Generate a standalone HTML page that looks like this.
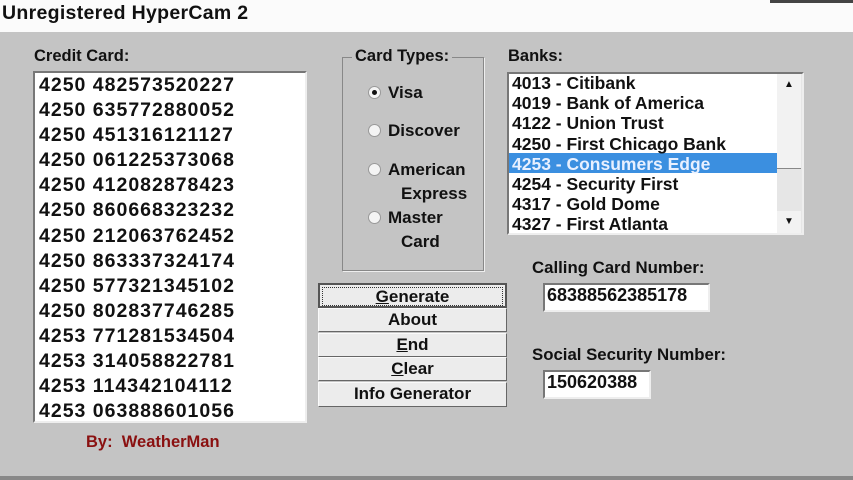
<!DOCTYPE html><html><head><style>
body{margin:0;width:853px;height:480px;background:#c4c4c4;position:relative;overflow:hidden;font-family:"Liberation Sans",sans-serif;font-weight:bold;color:#111}
.a{position:absolute;white-space:nowrap}
.box{position:absolute;background:#fff;border:2px solid;border-color:#777 #eee #eee #777;box-sizing:border-box}
.btn{position:absolute;left:318px;width:189px;background:#ececec;border:1px solid;border-color:#fafafa #666 #666 #fafafa;box-sizing:border-box;text-align:center;font-size:17px;line-height:22px}
.r{position:absolute;width:13px;height:13px;border-radius:50%;background:#f4f4f4;border:1px solid #999;box-sizing:border-box}
</style></head><body>
<div class="a" style="left:0;top:0;width:853px;height:32px;background:#fbfbfb"></div>
<div class="a" style="left:770px;top:0;width:83px;height:3px;background:#444"></div>
<div class="a" style="left:2px;top:2px;font-size:19.5px;letter-spacing:0.3px">Unregistered HyperCam 2</div>
<div class="a" style="left:34px;top:47px;font-size:16.5px">Credit Card:</div>
<div class="box" style="left:33px;top:71px;width:274px;height:352px"></div>
<div class="a" style="left:39px;top:73px;font-size:19.5px;letter-spacing:1px;line-height:25.1px">4250 482573520227<br>4250 635772880052<br>4250 451316121127<br>4250 061225373068<br>4250 412082878423<br>4250 860668323232<br>4250 212063762452<br>4250 863337324174<br>4250 577321345102<br>4250 802837746285<br>4253 771281534504<br>4253 314058822781<br>4253 114342104112<br>4253 063888601056</div>
<div class="a" style="left:342px;top:57px;width:140px;height:212px;border:1px solid #888;box-shadow:1px 1px 0 #eee"></div>
<div class="a" style="left:352px;top:47px;font-size:16.5px;background:#c4c4c4;padding:0 3px">Card Types:</div>
<div class="r" style="left:368px;top:86px"></div><div class="a" style="left:372px;top:90px;width:5px;height:5px;border-radius:50%;background:#111"></div>
<div class="r" style="left:368px;top:124px"></div><div class="r" style="left:368px;top:163px"></div><div class="r" style="left:368px;top:211px"></div>
<div class="a" style="left:388px;top:83px;font-size:17px">Visa</div>
<div class="a" style="left:388px;top:121px;font-size:17px">Discover</div>
<div class="a" style="left:388px;top:160px;font-size:17px">American</div>
<div class="a" style="left:401px;top:184px;font-size:17px">Express</div>
<div class="a" style="left:388px;top:208px;font-size:17px">Master</div>
<div class="a" style="left:401px;top:232px;font-size:17px">Card</div>
<div class="a" style="left:508px;top:47px;font-size:16.5px">Banks:</div>
<div class="box" style="left:507px;top:72px;width:297px;height:163px"></div>
<div class="a" style="left:509px;top:153px;width:268px;height:20px;background:#3b8fe0"></div>
<div class="a" style="left:777px;top:74px;width:25px;height:159px;background:#e6e6e6"></div>
<div class="a" style="left:777px;top:74px;width:24px;height:22px;background:#f2f2f2;border-bottom:1px solid #888;text-align:center;font-size:10px;line-height:22px">▲</div>
<div class="a" style="left:777px;top:96px;width:24px;height:72px;background:#f2f2f2;border-bottom:1px solid #888"></div>
<div class="a" style="left:777px;top:211px;width:24px;height:22px;background:#f2f2f2;text-align:center;font-size:10px;line-height:22px">▼</div>
<div class="a" style="left:512px;top:73px;font-size:17.5px;line-height:20.2px">4013 - Citibank<br>4019 - Bank of America<br>4122 - Union Trust<br>4250 - First Chicago Bank<br><span style="color:#e8f0ff">4253 - Consumers Edge</span><br>4254 - Security First<br>4317 - Gold Dome<br>4327 - First Atlanta</div>
<div class="btn" style="top:283px;height:25px;border:2px solid #555"><span style="display:block;margin:2px;border:1px dotted #333;line-height:17px"><u>G</u>enerate</span></div>
<div class="btn" style="top:308px;height:24px">About</div>
<div class="btn" style="top:333px;height:24px"><u>E</u>nd</div>
<div class="btn" style="top:357px;height:24px"><u>C</u>lear</div>
<div class="btn" style="top:382px;height:25px">Info Generator</div>
<div class="a" style="left:532px;top:258px;font-size:16.8px">Calling Card Number:</div>
<div class="box" style="left:543px;top:283px;width:167px;height:29px"></div>
<div class="a" style="left:547px;top:285px;font-size:18px">68388562385178</div>
<div class="a" style="left:532px;top:345px;font-size:16.8px">Social Security Number:</div>
<div class="box" style="left:543px;top:370px;width:108px;height:29px"></div>
<div class="a" style="left:547px;top:372px;font-size:18px">150620388</div>
<div class="a" style="left:86px;top:433px;font-size:16.5px;color:#8a1010">By:&nbsp; WeatherMan</div>
<div class="a" style="left:0;top:476px;width:853px;height:4px;background:#888"></div>
</body></html>
